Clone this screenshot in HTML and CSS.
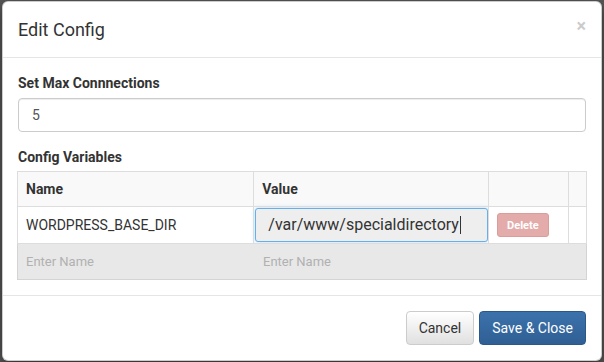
FILE: index.html
```html
<!DOCTYPE html>
<html lang="en">
<head>
<meta charset="UTF-8" />
<title>Edit Config</title>
<link rel="stylesheet" href="styles.css">
</head>
<body>
<div class="modal">
  <div class="modal-header">
    <span class="close">&times;</span>
    <h4 class="modal-title">Edit Config</h4>
  </div>
  <div class="modal-body">
    <div class="form-group">
      <label>Set Max Connnections</label>
      <input class="form-control" type="text" value="5" />
    </div>
    <label class="label-tight">Config Variables</label>
    <table class="vars">
      <colgroup>
        <col class="c-name" /><col class="c-value" /><col class="c-act" /><col class="c-pad" />
      </colgroup>
      <thead>
        <tr><th>Name</th><th>Value</th><th></th><th></th></tr>
      </thead>
      <tbody>
        <tr class="var-row">
          <td>WORDPRESS_BASE_DIR</td>
          <td class="edit"><div class="value-input">/var/www/specialdirectory<span class="caret"></span></div></td>
          <td class="act"><button class="btn-delete" disabled>Delete</button></td>
          <td></td>
        </tr>
        <tr class="new-row">
          <td colspan="4">
            <div class="new-fields">
              <span class="ph ph-name">Enter Name</span>
              <span class="ph">Enter Name</span>
            </div>
          </td>
        </tr>
      </tbody>
    </table>
  </div>
  <div class="modal-footer">
    <button class="btn btn-default">Cancel</button>
    <button class="btn btn-primary">Save &amp; Close</button>
  </div>
</div>
</body>
</html>
```

FILE: styles.css
```css
* { box-sizing: border-box; }
html, body {
  margin: 0;
  height: 100%;
  background: #585858;
  font-family: Roboto, 'Liberation Sans', sans-serif;
  color: #333;
  overflow: hidden;
}
body { padding: 1px 2px; }
.modal {
  width: 600px;
  background: #fff;
  border: 1px solid rgba(0,0,0,0.2);
  border-radius: 6px;
  box-shadow: 0 5px 15px rgba(0,0,0,0.5);
}
/* Header */
.modal-header {
  padding: 15px;
  border-bottom: 1px solid #e5e5e5;
}
.modal-title {
  margin: 0;
  font-size: 18px;
  font-weight: 400;
  line-height: 25px;
  color: #333;
}
.close {
  float: right;
  margin-top: 0;
  font-size: 18px;
  font-weight: 700;
  line-height: 18px;
  color: #000;
  opacity: 0.2;
}
/* Body */
.modal-body { padding: 15px; }
.form-group { margin-bottom: 15px; }
label {
  display: block;
  margin-bottom: 5px;
  font-size: 14px;
  font-weight: 700;
  line-height: 20px;
}
.label-tight { margin-bottom: 4px; }
.form-control {
  display: block;
  width: 100%;
  height: 34px;
  padding: 6px 13px;
  font-family: inherit;
  font-size: 14px;
  color: #555;
  background: #fff;
  border: 1px solid #ccc;
  border-radius: 4px;
  box-shadow: inset 0 1px 1px rgba(0,0,0,0.075);
}
/* Variables table */
.vars {
  width: 570px;
  margin: 0 -1px;
  border-collapse: collapse;
  font-size: 14px;
  border: 1px solid #d4d4d4;
}
.c-name { width: 237px; }
.c-value { width: 235px; }
.c-act { width: 80px; }
.c-pad { width: 18px; }
.vars th, .vars td {
  border: 1px solid #ddd;
  padding: 0 8px;
  text-align: left;
  vertical-align: middle;
}
.vars thead th {
  height: 35px;
  background: #f9f9f9;
  font-weight: 700;
}
.var-row td { height: 37px; background: #fff; }
.vars td.edit { padding: 0 0 0 1px; }
.value-input {
  height: 34px;
  line-height: 32px;
  padding: 0 12px;
  font-size: 16px;
  color: #333;
  background: #eee;
  border: 1px solid #66afe9;
  border-radius: 3px;
  box-shadow: 0 0 4px rgba(102,175,233,0.5);
}
.caret {
  display: inline-block;
  width: 1px;
  height: 18px;
  margin-left: 1px;
  vertical-align: -4px;
  background: #333;
}
.btn-delete {
  display: block;
  height: 24px;
  padding: 0 9px;
  font-family: inherit;
  font-size: 11px;
  font-weight: 700;
  color: #fff;
  background: #e3acab;
  border: 1px solid #dc9c9b;
  border-radius: 3px;
}
.vars tr.new-row td {
  height: 36px;
  padding: 0;
  background: #e8e8e8;
  border-color: #d4d4d4;
}
.new-fields { display: flex; }
.ph { padding-left: 8px; color: #b1b1b1; font-size: 13px; }
.ph-name { width: 237px; }
/* Footer */
.modal-footer {
  padding: 15px;
  border-top: 1px solid #e5e5e5;
  display: flex;
  justify-content: flex-end;
  gap: 5px;
}
.btn {
  height: 34px;
  padding: 6px 12px;
  font-family: inherit;
  font-size: 14px;
  line-height: 20px;
  border-radius: 4px;
  border: 1px solid transparent;
}
.btn-default {
  color: #333;
  background: linear-gradient(#fff, #e0e0e0);
  border-color: #ccc;
}
.btn-primary {
  color: #fff;
  background: linear-gradient(#3c72ac, #2f5f94);
  border-color: #2b5889;
}
```
